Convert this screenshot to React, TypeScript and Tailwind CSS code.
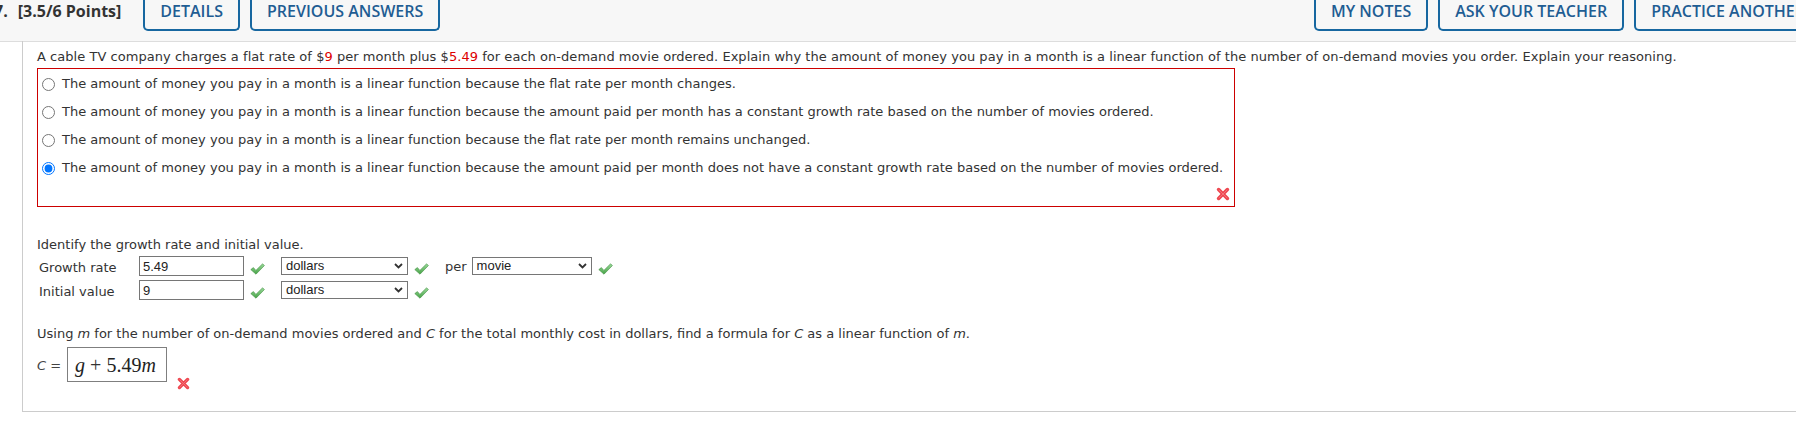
import React from "react";

const options = [
    "The amount of money you pay in a month is a linear function because the flat rate per month changes.",
    "The amount of money you pay in a month is a linear function because the amount paid per month has a constant growth rate based on the number of movies ordered.",
    "The amount of money you pay in a month is a linear function because the flat rate per month remains unchanged.",
    "The amount of money you pay in a month is a linear function because the amount paid per month does not have a constant growth rate based on the number of movies ordered.",
];

const Check = () => (
    <svg width="15" height="12" viewBox="0 0 15 12" className="block shrink-0">
        <defs>
            <linearGradient id="chk" x1="0" y1="0" x2="0" y2="1">
                <stop offset="0" stopColor="#9ad99a" />
                <stop offset="1" stopColor="#46a346" />
            </linearGradient>
        </defs>
        <path
            d="M0.8 6.6 L3.4 4.6 L5.9 7.4 L12.6 0.8 L14.4 2.6 L6 11.2 Z"
            fill="url(#chk)"
            stroke="#3f8f3f"
            strokeWidth="0.6"
            strokeLinejoin="round"
        />
    </svg>
);

const Cross = ({ size = 14 }: { size?: number }) => (
    <svg width={size} height={size} viewBox="0 0 14 14" className="block shrink-0">
        <path d="M2.6 2.6 L11.4 11.4 M11.4 2.6 L2.6 11.4" stroke="#ee4750" strokeWidth="3.6" strokeLinecap="round" />
        <path d="M3 3 L11 11 M11 3 L3 11" stroke="#f98f94" strokeWidth="1" strokeLinecap="round" opacity="0.6" />
    </svg>
);

const Field = ({ value }: { value: string }) => (
    <input
        readOnly
        value={value}
        className="h-[20px] w-[105px] shrink-0 border border-[#767676] bg-white px-[3px] font-['Liberation_Sans',Arial,sans-serif] text-[13px] text-[#222] outline-none"
    />
);

const Select = ({ value, w }: { value: string; w: string }) => (
    <div
        className={`flex h-[18px] shrink-0 items-center justify-between border border-[#767676] bg-white pl-[4px] pr-[4px] font-['Liberation_Sans',Arial,sans-serif] text-[13px] text-[#222] ${w}`}
    >
        <span>{value}</span>
        <svg width="9" height="6" viewBox="0 0 9 6" className="block">
            <path d="M1 1 L4.5 4.5 L8 1" fill="none" stroke="#333" strokeWidth="1.8" />
        </svg>
    </div>
);

const TabButton = ({ label }: { label: string }) => (
    <div className="h-[31px] shrink-0 whitespace-nowrap rounded-b-[5px] border-x-2 border-b-2 border-[#1767a0] px-[15px] pt-[1px] font-semibold leading-[20px] text-[#1f5d93]">
        {label}
    </div>
);

export default function App() {
    return (
        <div className="h-[448px] w-[1796px] overflow-hidden bg-white">
            {/* question header */}
            <div className="h-[42px] border-b border-[#dddddd] bg-[#f7f7f7] font-['Open_Sans',sans-serif] text-[16px]">
                <div className="flex w-[1822px] items-start">
                    <div className="flex items-start gap-[10px]">
                        <span className="-ml-[6px] pt-[1px] font-bold leading-[20px] text-[#333]">7.</span>
                        <span className="whitespace-nowrap pt-[1px] font-bold leading-[20px] text-[#333]">[3.5/6 Points]</span>
                        <div className="ml-[12px] flex gap-[10px]">
                            <TabButton label="DETAILS" />
                            <TabButton label="PREVIOUS ANSWERS" />
                        </div>
                    </div>
                    <div className="ml-auto flex gap-[10px]">
                        <TabButton label="MY NOTES" />
                        <TabButton label="ASK YOUR TEACHER" />
                        <TabButton label="PRACTICE ANOTHER" />
                    </div>
                </div>
            </div>

            {/* question body */}
            <div className="-mt-px ml-[22px] w-[1790px] border-b border-l border-r border-[#cccccc] pb-[21px] pl-[14px] pt-[7px] font-['DejaVu_Sans',Verdana,sans-serif] text-[13px] leading-[18px] text-[#333]">
                <p className="tracking-[0.04px]">
                    A cable TV company charges a flat rate of $<span className="text-[#dd0000]">9</span> per month plus $
                    <span className="text-[#dd0000]">5.49</span> for each on-demand movie ordered. Explain why the amount of money you pay in a month
                    is a linear function of the number of on-demand movies you order. Explain your reasoning.
                </p>

                <div className="mt-[2px] w-[1198px] border border-[#cc0000] pb-[5px] pt-[1px]">
                    {options.map((t, i) => (
                        <label key={i} className="flex h-[28px] items-center">
                            <input type="radio" name="reason" defaultChecked={i === 3} className="m-0 ml-[4px] h-[13px] w-[13px] shrink-0" />
                            <span className="ml-[7px]">{t}</span>
                        </label>
                    ))}
                    <div className="mt-[5px] flex justify-end pr-[4px]">
                        <Cross />
                    </div>
                </div>

                <p className="mt-[29px]">Identify the growth rate and initial value.</p>
                <div className="flex h-[24px] items-center">
                    <span className="w-[102px] shrink-0 pl-[2px] pt-[3px]">Growth rate</span>
                    <Field value="5.49" />
                    <span className="ml-[6px] mt-[6px]">
                        <Check />
                    </span>
                    <div className="ml-[16px]">
                        <Select value="dollars" w="w-[127px]" />
                    </div>
                    <span className="ml-[6px] mt-[6px]">
                        <Check />
                    </span>
                    <span className="ml-[16px] pt-[2px]">per</span>
                    <div className="ml-[5px]">
                        <Select value="movie" w="w-[120px]" />
                    </div>
                    <span className="ml-[6px] mt-[6px]">
                        <Check />
                    </span>
                </div>
                <div className="flex h-[24px] items-center">
                    <span className="w-[102px] shrink-0 pl-[2px] pt-[3px]">Initial value</span>
                    <Field value="9" />
                    <span className="ml-[6px] mt-[6px]">
                        <Check />
                    </span>
                    <div className="ml-[16px]">
                        <Select value="dollars" w="w-[127px]" />
                    </div>
                    <span className="ml-[6px] mt-[6px]">
                        <Check />
                    </span>
                </div>

                <p className="mt-[23px]">
                    Using <i>m</i> for the number of on-demand movies ordered and <i>C</i> for the total monthly cost in dollars, find a formula for{" "}
                    <i>C</i> as a linear function of <i>m</i>.
                </p>
                <div className="mt-[4px] flex items-start">
                    <span className="mt-[10px] text-[#444]">
                        <i>C</i> =
                    </span>
                    <div className="ml-[6px] flex h-[35px] w-[100px] items-center border border-[#7f7f7f] pl-[7px] font-['Liberation_Serif','Times_New_Roman',serif] text-[20px] leading-[22px] text-[#222]">
                        <i>g</i>
                        <span className="mx-[5px] text-[#333]">+</span>
                        <span>5.49</span>
                        <i>m</i>
                    </div>
                    <span className="ml-[10px] mt-[30px]">
                        <Cross size={13} />
                    </span>
                </div>
            </div>
        </div>
    );
}
